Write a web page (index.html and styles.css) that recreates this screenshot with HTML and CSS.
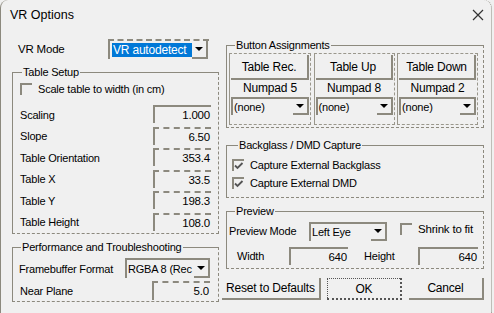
FILE: index.html
```
<!DOCTYPE html>
<html>
<head>
    <link rel="stylesheet" href="styles.css">
</head>
<body>
<div class="window">
    <div class="titlebar">
        <span class="title">VR Options</span>
        <svg class="close" width="12" height="12" viewBox="0 0 12 12"><path d="M1 1 L11 11 M11 1 L1 11" stroke="#333" stroke-width="1.2" fill="none"/></svg>
    </div>
    <div class="main">
        <div class="col left">
            <div class="vrmode">
                <label>VR Mode</label>
                <div class="combo vr"><span class="val"><span class="sel">VR autodetect</span></span><span class="arrow"></span></div>
            </div>
            <fieldset class="group setup">
                <legend>Table Setup</legend>
                <div class="check"><span class="box"></span>Scale table to width (in cm)</div>
                <div class="fields">
                    <div class="field"><label>Scaling</label><span class="edit">1.000</span></div>
                    <div class="field"><label>Slope</label><span class="edit dash">6.50</span></div>
                    <div class="field"><label>Table Orientation</label><span class="edit dash">353.4</span></div>
                    <div class="field"><label>Table X</label><span class="edit dash">33.5</span></div>
                    <div class="field"><label>Table Y</label><span class="edit dash">198.3</span></div>
                    <div class="field"><label>Table Height</label><span class="edit dash">108.0</span></div>
                </div>
            </fieldset>
            <fieldset class="group perf">
                <legend>Performance and Troubleshooting</legend>
                <div class="field fb"><label>Framebuffer Format</label><div class="combo fbc"><span class="val">RGBA 8 (Rec</span><span class="arrow"></span></div></div>
                <div class="field near"><label>Near Plane</label><span class="edit dash">5.0</span></div>
            </fieldset>
        </div>
        <div class="col right">
            <fieldset class="group buttons">
                <legend>Button Assignments</legend>
                <div class="assign">
                    <div class="slot">
                        <div class="btn">Table Rec.</div>
                        <div class="key">Numpad 5</div>
                        <div class="combo small"><span class="val">(none)</span><span class="arrow"></span></div>
                    </div>
                    <div class="slot">
                        <div class="btn">Table Up</div>
                        <div class="key">Numpad 8</div>
                        <div class="combo small"><span class="val">(none)</span><span class="arrow"></span></div>
                    </div>
                    <div class="slot">
                        <div class="btn">Table Down</div>
                        <div class="key">Numpad 2</div>
                        <div class="combo small"><span class="val">(none)</span><span class="arrow"></span></div>
                    </div>
                </div>
            </fieldset>
            <fieldset class="group capture">
                <legend>Backglass / DMD Capture</legend>
                <div class="check"><span class="box on"><svg width="10" height="10" viewBox="0 0 10 10"><path d="M1 4.5 L3.5 7 L8.5 2" stroke="#555" stroke-width="1.8" fill="none"/></svg></span>Capture External Backglass</div>
                <div class="check second"><span class="box on"><svg width="10" height="10" viewBox="0 0 10 10"><path d="M1 4.5 L3.5 7 L8.5 2" stroke="#555" stroke-width="1.8" fill="none"/></svg></span>Capture External DMD</div>
            </fieldset>
            <fieldset class="group preview">
                <legend>Preview</legend>
                <div class="prow">
                    <label class="pmode">Preview Mode</label>
                    <div class="combo pc"><span class="val">Left Eye</span><span class="arrow"></span></div>
                    <div class="check shrink"><span class="box"></span>Shrink to fit</div>
                </div>
                <div class="prow size">
                    <label class="wlabel">Width</label>
                    <span class="edit w">640</span>
                    <label class="hlabel">Height</label>
                    <span class="edit h">640</span>
                </div>
            </fieldset>
            <div class="actions">
                <div class="pbtn reset">Reset to Defaults</div>
                <div class="pbtn ok">OK</div>
                <div class="pbtn cancel">Cancel</div>
            </div>
        </div>
    </div>
</div>
</body>
</html>
```

FILE: styles.css
```
body {
  margin: 0;
  background: #f0f0f0;
  font-family: "Liberation Sans", Arial, sans-serif;
  font-size: 11px;
  letter-spacing: -0.2px;
  color: #000;
}

.window {
  box-sizing: border-box;
  width: 492px;
  height: 313px;
  border-left: 1px solid #8c897e;
  border-right: 1px dotted #8c897e;
  border-top-left-radius: 8px;
  border-top-right-radius: 8px;
}

.titlebar {
  height: 30px;
  display: flex;
  align-items: center;
  justify-content: space-between;
  padding: 0 7px 0 9px;
}
.title {
  font-size: 12.5px;
  letter-spacing: 0;
}
.close {
  margin-top: -1px;
}

.main {
  display: flex;
  gap: 7px;
  padding-left: 11px;
}
.col.left {
  width: 207px;
}
.col.right {
  width: 258px;
}

/* group boxes */
.group {
  margin: 0;
  border-top: 1px solid #8c897e;
  border-left: 1px solid #8c897e;
  border-right: 1px dashed #8c897e;
  border-bottom: 1px dashed #8c897e;
  padding: 0 6px;
}
.group legend {
  padding: 0 1px;
  margin-left: 2px;
  line-height: 13px;
}

label {
  white-space: nowrap;
}

/* combo boxes */
.combo {
  box-sizing: border-box;
  display: flex;
  height: 20px;
  border-top: 2px solid #8c897e;
  border-left: 2px solid #8c897e;
  background: #f0f0f0;
}
.combo .val {
  flex: 1;
  overflow: hidden;
  white-space: nowrap;
  padding: 0 1px;
  display: flex;
  align-items: center;
}
.combo .arrow {
  width: 14px;
  border-right: 2px solid #8c897e;
  border-bottom: 2px solid #8c897e;
  position: relative;
}
.combo .arrow::after {
  content: '';
  position: absolute;
  left: 3px;
  top: 6px;
  border-left: 4px solid transparent;
  border-right: 4px solid transparent;
  border-top: 4px solid #000;
}
.sel {
  background: #0078d7;
  color: #fff;
  display: block;
  width: 100%;
  height: 14px;
  line-height: 14px;
  padding-left: 1px;
  font-size: 12px;
}

/* edits */
.edit {
  box-sizing: border-box;
  width: 58px;
  height: 18px;
  border-top: 2px solid #8c897e;
  border-left: 2px solid #8c897e;
  text-align: right;
  padding-right: 1px;
  line-height: 16px;
  font-size: 11.5px;
}
.edit.dash {
  border-top-style: dashed;
}

/* check boxes */
.check {
  display: flex;
  align-items: center;
  gap: 6px;
  height: 14px;
  white-space: nowrap;
}
.box {
  box-sizing: border-box;
  width: 12px;
  height: 12px;
  border-top: 2px solid #8c897e;
  border-left: 2px solid #8c897e;
  display: flex;
}

/* left column */
.vrmode {
  display: flex;
  align-items: center;
  margin-top: 9px;
  height: 20px;
  padding-left: 6px;
  font-size: 11.5px;
}
.vrmode label {
  width: 90px;
}
.combo.vr {
  width: 101px;
  padding: 0 1px 0 2px;
  border-top-style: dashed;
}
.combo.vr .val {
  padding: 0;
}

.setup {
  margin-top: 7px;
  padding: 3px 7px 2px 7px;
}
.fields {
  margin-top: 9px;
  display: flex;
  flex-direction: column;
  gap: 3.5px;
}
.field {
  display: flex;
  align-items: center;
  justify-content: space-between;
  height: 18px;
}
.field label {
  padding-top: 1px;
}

.perf {
  margin-top: 7.5px;
  padding: 0 8px 1px 6px;
}
.field.fb {
  margin-top: 4px;
  height: 20px;
}
.combo.fbc {
  width: 85px;
}
.field.near {
  margin-top: 3px;
  height: 19px;
  padding-left: 1px;
}
.field.near .edit {
  height: 19px;
}

/* right column */
.buttons {
  margin-top: 9px;
  padding: 1px 5px 2px 2px;
}
.buttons legend {
  margin-left: 6px;
}
.assign {
  display: grid;
  grid-template-columns: 82px 81px 81px;
  gap: 2.5px;
}
.slot {
  border: 1px dashed #9a978c;
  border-left-style: solid;
  padding: 1px 1px 9px 1px;
}
.btn {
  box-sizing: border-box;
  height: 25px;
  border-right: 2px solid #8c897e;
  border-bottom: 2px solid #8c897e;
  display: flex;
  align-items: center;
  justify-content: center;
  font-size: 12px;
}
.key {
  height: 14px;
  line-height: 14px;
  text-align: center;
  margin-top: 1px;
  font-size: 12px;
}
.combo.small {
  height: 18px;
  margin-top: 2px;
}
.combo.small .arrow::after {
  top: 5px;
}

.capture {
  margin-top: 11px;
  padding: 6px 6px 7px 5px;
}
.capture legend {
  margin-left: 6px;
}
.check.second {
  margin-top: 4px;
}

.preview {
  margin-top: 7px;
  padding: 4px 5px 3px 2px;
}
.preview legend {
  margin-left: 6px;
}
.prow {
  display: flex;
  align-items: center;
  height: 18px;
}
.pmode {
  width: 80px;
}
.combo.pc {
  width: 78px;
  height: 19px;
}
.combo.pc .arrow::after {
  top: 5px;
}
.check.shrink {
  margin-left: 13px;
  align-self: flex-start;
  font-size: 11.5px;
}
.prow.size {
  margin-top: 7px;
}
.wlabel {
  width: 52px;
  padding-left: 8px;
}
.edit.w {
  width: 59px;
}
.hlabel {
  margin-left: 16px;
  width: 54px;
}
.edit.h {
  width: 60px;
}

.actions {
  display: flex;
  margin-top: 9px;
  margin-left: -4px;
  gap: 6px;
}
.pbtn {
  box-sizing: border-box;
  height: 22px;
  width: 76px;
  display: flex;
  align-items: center;
  justify-content: center;
  border-right: 2px solid #8c897e;
  border-bottom: 2px solid #8c897e;
  font-size: 12px;
}
.pbtn.reset {
  width: 100px;
}
.pbtn.ok {
  border: 1px dotted #555;
  border-right: 2px dotted #555;
  border-bottom: 2px dotted #555;
}
.pbtn.cancel {
  margin-left: 1px;
}
```
